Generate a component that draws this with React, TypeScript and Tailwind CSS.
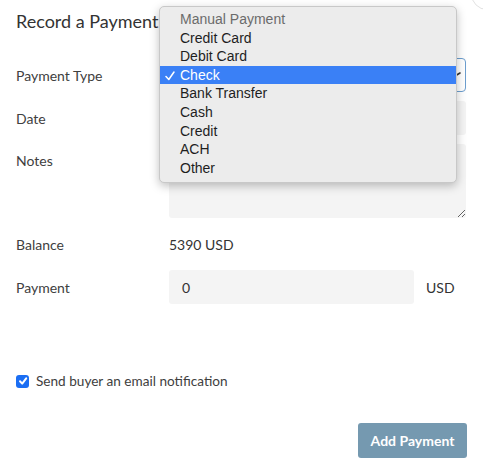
import React from "react";

const options = [
  "Credit Card",
  "Debit Card",
  "Check",
  "Bank Transfer",
  "Cash",
  "Credit",
  "ACH",
  "Other",
];

export default function App() {
  return (
    <div
      className="relative w-[483px] h-[466px] bg-white overflow-hidden text-[#404040]"
      style={{ fontFamily: "Lato, 'Noto Sans', sans-serif" }}
    >
      {/* faint circle top right */}
      <div className="absolute left-[471px] top-[-22px] w-[32px] h-[32px] rounded-full border border-[#e2e2e2]" />

      <div className="pl-[16px] pr-[17px]">
        <h1 className="h-[58px] pt-[9px] text-[18px] leading-[24px] text-[#333]">
          Record a Payment
        </h1>

        <div className="flex flex-col gap-[9px]">
          <div className="flex items-center h-[34px]">
            <div className="w-[153px] text-[14px]">Payment Type</div>
            <div className="flex-1 h-[34px] rounded-[4px] border border-[#6d9fcf] bg-white flex items-center justify-end pr-[3px]">
              <svg width="8" height="8" viewBox="0 0 8 8">
                <path d="M1 5 L6 2" stroke="#333" strokeWidth="1.6" strokeLinecap="round" />
              </svg>
            </div>
          </div>

          <div className="flex items-center h-[34px]">
            <div className="w-[153px] text-[14px]">Date</div>
            <div className="flex-1 h-[34px] rounded-[3px] bg-[#f4f4f4]" />
          </div>

          <div className="flex items-start h-[74px]">
            <div className="w-[153px] text-[14px] leading-[34px]">Notes</div>
            <textarea
              className="flex-1 h-[74px] rounded-[3px] bg-[#f4f4f4] outline-none border-0"
              defaultValue=""
            />
          </div>

          <div className="flex items-center h-[34px]">
            <div className="w-[153px] text-[14px]">Balance</div>
            <div className="text-[14px] text-[#333]">5390 USD</div>
          </div>

          <div className="flex items-center h-[34px]">
            <div className="w-[153px] text-[14px]">Payment</div>
            <div className="w-[245px] h-[34px] rounded-[3px] bg-[#f4f4f4] flex items-center pl-[13px] text-[14px] text-[#333]">
              0
            </div>
            <div className="ml-[12px] text-[14px] text-[#333]">USD</div>
          </div>
        </div>

        <div className="mt-[69px] flex items-center h-[16px]">
          <div className="w-[13px] h-[13px] rounded-[3px] bg-[#1b6ef3] flex items-center justify-center">
            <svg width="10" height="10" viewBox="0 0 10 10">
              <path d="M2 5.3 L4.2 7.6 L8.2 2.4" fill="none" stroke="white" strokeWidth="2" strokeLinecap="round" strokeLinejoin="round" />
            </svg>
          </div>
          <span className="ml-[7px] text-[13.6px] text-[#404040]">Send buyer an email notification</span>
        </div>

        <div className="mt-[34px] flex justify-end">
          <button className="w-[109px] h-[35px] rounded-[3px] bg-[#7599b0] text-white text-[14px] font-bold mr-[-1px]">
            Add Payment
          </button>
        </div>
      </div>

      {/* dropdown overlay */}
      <div
        className="absolute left-[159px] top-[6px] w-[298px] h-[177px] rounded-[5px] bg-[#ececec] border border-[#c8c8c8] shadow-[0_3px_10px_rgba(0,0,0,0.25)] pt-[3px]"
        style={{ fontFamily: "'Liberation Sans', Arial, sans-serif" }}
      >
        <div className="h-[18.6px] leading-[18.6px] pl-[20px] text-[14px] text-[#6b6b6b]">
          Manual Payment
        </div>
        {options.map((o) =>
          o === "Check" ? (
            <div
              key={o}
              className="relative h-[18.6px] leading-[18.6px] pl-[20px] text-[14px] text-white bg-[#3a80f6]"
            >
              <svg className="absolute left-[5px] top-[5px]" width="10" height="10" viewBox="0 0 10 10">
                <path d="M1 5.5 L3.8 8.5 L9 1" fill="none" stroke="white" strokeWidth="1.5" strokeLinecap="round" strokeLinejoin="round" />
              </svg>
              {o}
            </div>
          ) : (
            <div key={o} className="h-[18.6px] leading-[18.6px] pl-[20px] text-[14px] text-[#1e1e1e]">
              {o}
            </div>
          )
        )}
      </div>
    </div>
  );
}
